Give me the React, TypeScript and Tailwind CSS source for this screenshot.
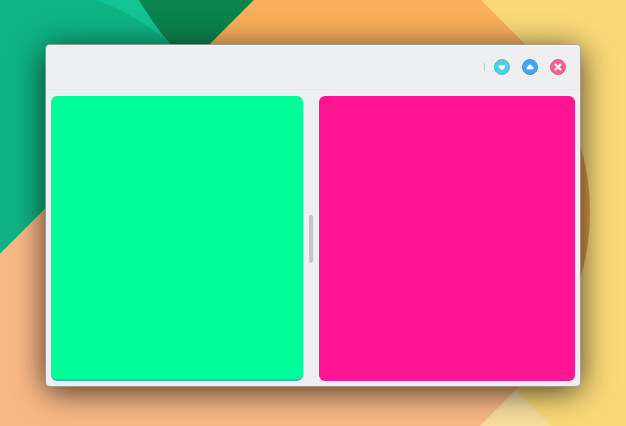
import type { ReactNode } from "react";

function Wallpaper() {
  return (
    <svg
      className="absolute inset-0 -z-10 h-full w-full"
      viewBox="0 0 626 426"
      preserveAspectRatio="none"
      aria-hidden="true"
    >
      <rect width="626" height="426" fill="#fad978" />
      <path d="M0 0H254L0 254Z" fill="#0fb382" />
      <path d="M95 0Q136 13 170 44L185 60L145 0Z" fill="#12c396" />
      <path d="M139 0H254L180 74V58L170 44Q153 24 139 0Z" fill="#0a834c" />
      <path d="M254 0H481L552 71L400 240L180 74Z" fill="#f8b05a" />
      <circle cx="358" cy="212" r="232" fill="#dc994e" clipPath="url(#side)" />
      <clipPath id="side">
        <rect x="560" y="100" width="60" height="220" />
      </clipPath>
      <path d="M0 254L240 14L566 340L480 426H0Z" fill="#f9b987" clipPath="url(#lower)" />
      <clipPath id="lower">
        <path d="M0 200H200V300H560V426H0Z" />
      </clipPath>
      <path d="M516 390L551 426H480Z" fill="#f7dda0" />
    </svg>
  );
}

function RoundButton({
  label,
  className,
  children,
}: {
  label: string;
  className: string;
  children: ReactNode;
}) {
  return (
    <button
      aria-label={label}
      className={`flex size-4 items-center justify-center rounded-full border ${className}`}
    >
      <svg className="size-3.5 shrink-0" viewBox="0 0 14 14" fill="none">
        {children}
      </svg>
    </button>
  );
}

export default function App() {
  return (
    <div className="relative isolate h-[426px] w-[626px] overflow-hidden pt-[45px] pl-[46px]">
      <Wallpaper />
      <main className="flex h-[341px] w-[534px] flex-col rounded-[4px] bg-[#eeeff1] shadow-[inset_0_1px_0_#fafafa,0_0_0_1px_rgba(160,160,155,0.8),0_5px_32px_rgba(0,0,0,0.75)]">
        <header className="flex h-[45px] items-center justify-end gap-3 border-b border-[#e5e7e9] pr-3.5">
          <span className="-mr-[3px] h-2 w-px bg-[#b8c9c9]" />
          <RoundButton label="Minimize" className="border-[#45c0cf] bg-[#4dd0e1]">
            <path
              d="M4 5.4Q5.5 4.6 7 5.5Q8.5 4.6 10 5.4Q10.8 6.5 10 7.4L7 10.3L4 7.4Q3.2 6.5 4 5.4Z"
              fill="white"
            />
          </RoundButton>
          <RoundButton label="Maximize" className="border-[#3b90e0] bg-[#42a5f5]">
            <path
              d="M7 4.6L10 7.7V8.8H4V7.7Z"
              fill="white"
              stroke="white"
              strokeWidth="1"
              strokeLinejoin="round"
            />
          </RoundButton>
          <RoundButton label="Close" className="border-[#e35a86] bg-[#f06292]">
            <path d="M4 4L10 10M10 4L4 10" stroke="white" strokeWidth="2" />
          </RoundButton>
        </header>
        <div className="flex flex-1 px-[5px] pt-1.5 pb-[5px]">
          <section className="w-[252px] rounded-[6px] border-b-2 border-[#3db6bd] bg-[#00ff9b]" />
          <div className="flex w-4 items-center justify-center">
            <div className="h-12 w-1 rounded-full bg-[#c4c5cb]" />
          </div>
          <section className="flex-1 rounded-[6px] bg-[#ff1493]" />
        </div>
      </main>
    </div>
  );
}
